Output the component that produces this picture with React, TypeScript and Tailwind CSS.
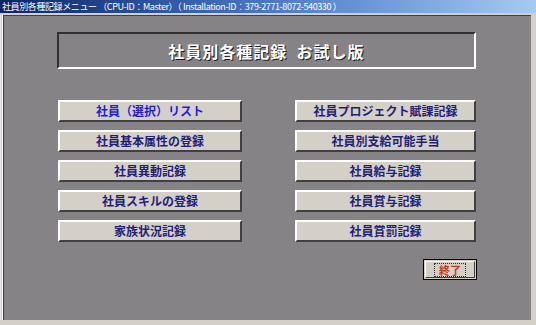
const FONT = "font-['Noto_Sans_CJK_JP','Noto_Sans',sans-serif]";

const leftButtons = [
  { label: "社員（選択）リスト", active: true },
  { label: "社員基本属性の登録" },
  { label: "社員異動記録" },
  { label: "社員スキルの登録" },
  { label: "家族状況記録" },
];

const rightButtons = [
  { label: "社員プロジェクト賦課記録" },
  { label: "社員別支給可能手当" },
  { label: "社員給与記録" },
  { label: "社員賞与記録" },
  { label: "社員賞罰記録" },
];

function MenuButton({ label, active, width }: { label: string; active?: boolean; width: string }) {
  return (
    <button
      className={`${width} h-[22px] flex items-center justify-center bg-[#d4d0c8] border-2 border-t-white border-l-white border-b-[#404040] border-r-[#404040] text-[12px] font-bold leading-none ${
        active ? "text-[#1c1ce0]" : "text-[#1f1f78]"
      }`}
    >
      {label}
    </button>
  );
}

export default function App() {
  return (
    <div className={`w-[536px] h-[325px] overflow-hidden bg-[#d4d0c8] flex flex-col ${FONT}`}>
      {/* ── Title bar ─────────────────────────────────────────── */}
      <div className="h-[13px] shrink-0 flex items-center px-[2px] bg-gradient-to-r from-[#0a246a] via-[#4a78c8] to-[#a6caf0]">
        <span className="text-[9px] tracking-[-0.4px] leading-none text-white whitespace-nowrap">
          社員別各種記録メニュー （CPU-ID：Master）（ Installation-ID：379-2771-8072-540330 ）
        </span>
      </div>

      {/* ── Form body ─────────────────────────────────────────── */}
      <div className="flex-1 flex mt-[2px] mr-[5px] mb-[5px]">
        <div className="w-[3px] shrink-0 border-l border-l-[#e8e8e8] border-r border-r-white" />
        <div className="flex-1 flex flex-col border-l border-t border-l-[#404040] border-t-[#404040] bg-[#858385]">
          <div className="ml-[53px] mt-[16px] w-[419px] h-[37px] flex items-center justify-center border-2 border-t-[#303030] border-l-[#303030] border-b-white border-r-white">
            <span className="text-[16px] font-bold text-white tracking-[1px] [text-shadow:1px_1px_0_#202020]">
              社員別各種記録&nbsp;&nbsp;お試し版
            </span>
          </div>

          <div className="flex ml-[54px] mt-[31px] gap-[53px]">
            <div className="flex flex-col gap-[8px]">
              {leftButtons.map((b) => (
                <MenuButton key={b.label} label={b.label} active={b.active} width="w-[184px]" />
              ))}
            </div>
            <div className="flex flex-col gap-[8px]">
              {rightButtons.map((b) => (
                <MenuButton key={b.label} label={b.label} width="w-[181px]" />
              ))}
            </div>
          </div>

          <div className="flex ml-[419px] mt-[17px]">
            <button className="w-[54px] h-[21px] flex items-center justify-center bg-[#d4d0c8] border border-black p-[1px]">
              <span className="w-full h-full flex items-center justify-center border border-t-white border-l-white border-b-[#404040] border-r-[#404040]">
                <span className="px-[4px] border border-dotted border-[#303030] text-[11px] font-bold leading-[12px] text-[#c43c1c]">
                  終了
                </span>
              </span>
            </button>
          </div>
        </div>
      </div>
    </div>
  );
}
